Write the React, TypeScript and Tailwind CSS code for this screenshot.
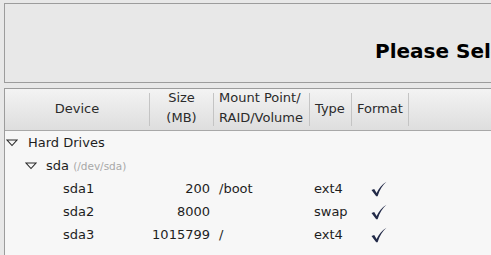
import React from "react";

type Part = { name: string; size: string; mount: string; type: string };

const parts: Part[] = [
  { name: "sda1", size: "200", mount: "/boot", type: "ext4" },
  { name: "sda2", size: "8000", mount: "", type: "swap" },
  { name: "sda3", size: "1015799", mount: "/", type: "ext4" },
];

function Expander() {
  return (
    <svg width="12" height="8" viewBox="0 0 12 8" className="shrink-0">
      <polygon points="1,1 11,1 6,6.5" fill="none" stroke="#2a2a2a" strokeWidth="1.1" />
    </svg>
  );
}

function Check() {
  return (
    <svg width="16" height="16" viewBox="0 0 16 16">
      <path d="M0.5 9 L3.2 8 L5.6 12 C7.8 7.5 10.8 3.5 15.5 0.8 C11.5 4.2 8.8 8.6 6.6 15.2 L5.2 15.2 Z" fill="#222a48" />
    </svg>
  );
}

function Sep() {
  return <div className="w-px h-[33px] bg-[#c4c4c4] shrink-0" />;
}

export default function App() {
  return (
    <div className="w-[491px] h-[255px] overflow-hidden bg-[#e8e8e8] pl-[4px] pt-[3px] font-['DejaVu_Sans',sans-serif] text-[13px] text-[#1e1e1e]">
      <div className="w-[600px] h-[80px] border border-r-0 border-[#9c9c9c] pl-[370px] pt-[36px]">
        <div className="text-[20px] leading-[23px] font-bold text-black whitespace-nowrap">Please Select</div>
      </div>

      <div className="mt-[5px] w-[600px] h-[200px] border border-r-0 border-[#9c9c9c] bg-[#f7f7f7]">
        <div className="h-[42px] flex items-center border-b border-[#a8a8a8] bg-gradient-to-b from-[#f3f3f3] to-[#dedede] text-[#2b2b2b] leading-[20px]">
          <div className="w-[144px] text-center mb-[2px]">Device</div>
          <Sep />
          <div className="w-[63px] text-center mb-[3px]">
            <div>Size</div>
            <div>(MB)</div>
          </div>
          <Sep />
          <div className="w-[95px] pl-[5px] mb-[3px]">
            <div>Mount Point/</div>
            <div>RAID/Volume</div>
          </div>
          <Sep />
          <div className="w-[41px] pl-[5px] mb-[2px]">Type</div>
          <Sep />
          <div className="w-[56px] pl-[5px] mb-[2px]">Format</div>
          <Sep />
        </div>

        <div className="leading-[23px]">
          <div className="h-[23px] flex items-center pl-[1px] gap-[10px]">
            <Expander />
            <span>Hard Drives</span>
          </div>
          <div className="h-[23px] flex items-center pl-[20px] gap-[9px]">
            <Expander />
            <span>
              sda <span className="text-[10.5px] text-[#a8a8a8]">(/dev/sda)</span>
            </span>
          </div>
          {parts.map((p) => (
            <div key={p.name} className="h-[23px] flex items-center">
              <div className="w-[144px] pl-[58px]">{p.name}</div>
              <div className="w-px" />
              <div className="w-[63px] text-right pr-[3px]">{p.size}</div>
              <div className="w-px" />
              <div className="w-[95px] pl-[5px]">{p.mount}</div>
              <div className="w-px" />
              <div className="w-[41px] pl-[4px]">{p.type}</div>
              <div className="w-px" />
              <div className="w-[56px] pl-[19px] flex items-center">
                <Check />
              </div>
            </div>
          ))}
        </div>
      </div>
    </div>
  );
}
